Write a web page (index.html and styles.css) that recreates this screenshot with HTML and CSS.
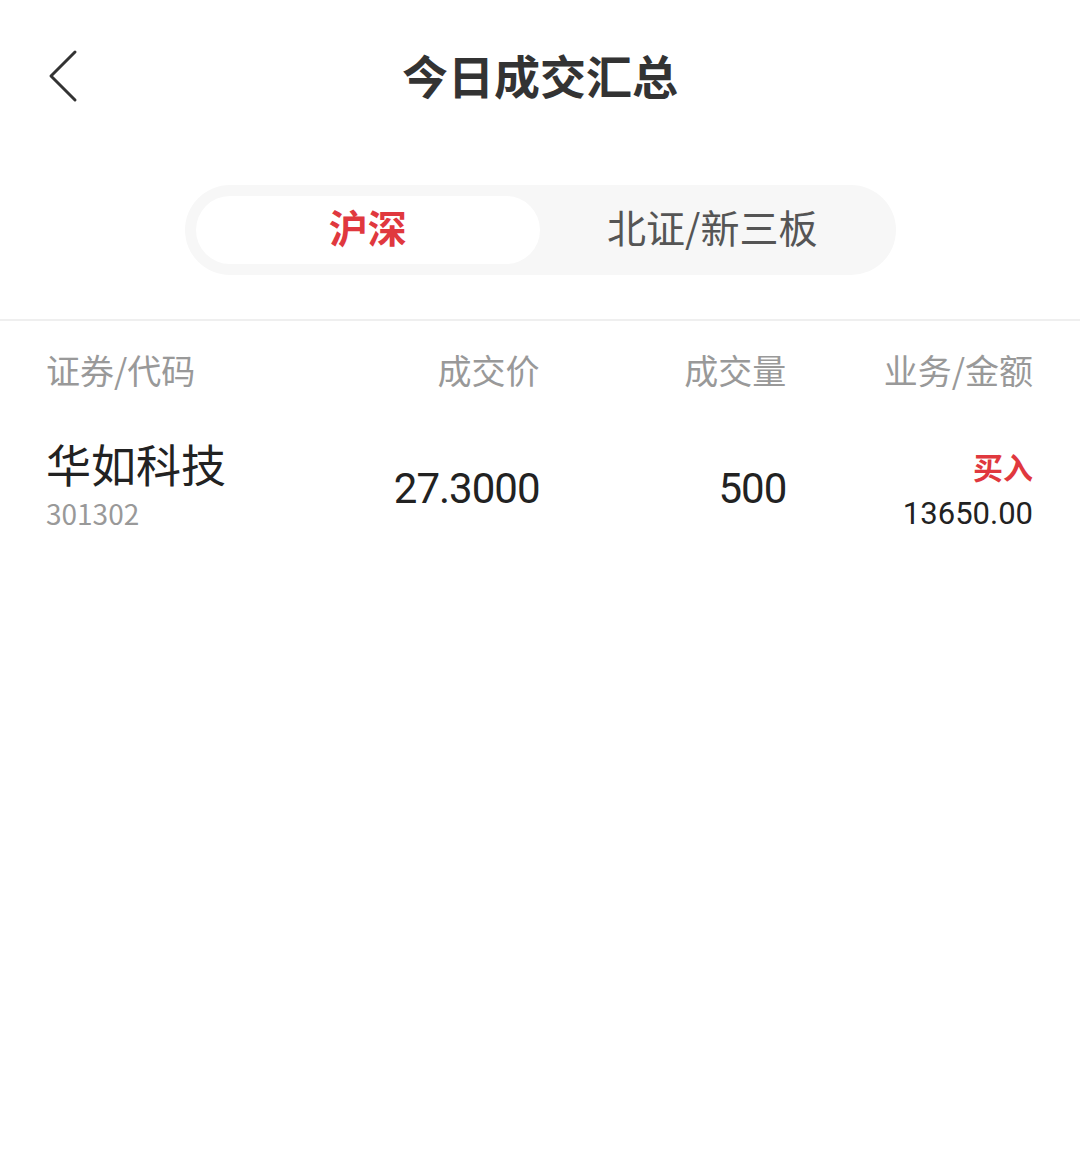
FILE: index.html
```html
<!DOCTYPE html>
<html lang="zh-CN">
<head>
  <meta charset="UTF-8">
  <title>今日成交汇总</title>
  <meta name="viewport" content="width=device-width, initial-scale=1">
  <link rel="stylesheet" href="styles.css">
</head>
<body>

  <!-- Barra superiore -->
  <div class="topbar">
    <span class="back">
      <svg width="34" height="54" viewBox="0 0 34 54">
        <polyline points="29,3 5,27 29,51" fill="none" stroke="#333" stroke-width="3" stroke-linecap="round" stroke-linejoin="round"/>
      </svg>
    </span>
    <h1 class="title">今日成交汇总</h1>
  </div>

  <!-- Selettore mercato -->
  <div class="tabs-wrap">
    <div class="tabs">
      <div class="tab active">沪深</div>
      <div class="tab">北证/新三板</div>
    </div>
  </div>

  <!-- Tabella -->
  <div class="table">
    <div class="row head">
      <div class="col left">证券/代码</div>
      <div class="col">成交价</div>
      <div class="col">成交量</div>
      <div class="col">业务/金额</div>
    </div>
    <div class="row item">
      <div class="col left">
        <div class="name">华如科技</div>
        <div class="code">301302</div>
      </div>
      <div class="col num">27.3000</div>
      <div class="col num">500</div>
      <div class="col">
        <div class="buy">买入</div>
        <div class="amount">13650.00</div>
      </div>
    </div>
  </div>

</body>
</html>
```

FILE: styles.css
```css
body {
  margin: 0;
  background: #fff;
  font-family: "Noto Sans CJK SC", "Noto Sans", sans-serif;
  color: #222;
}

.topbar {
  position: relative;
  height: 148px;
  padding-bottom: 6px;
  display: flex;
  align-items: center;
  justify-content: center;
}

.back {
  position: absolute;
  left: 46px;
  top: 49px;
  width: 34px;
  height: 54px;
}

.title {
  margin: 0;
  font-size: 46px;
  font-weight: bold;
  color: #333;
  line-height: 1;
}

.tabs-wrap {
  padding: 31px 0 44px;
  border-bottom: 2px solid #efefef;
  display: flex;
  justify-content: center;
}

.tabs {
  width: 711px;
  height: 90px;
  box-sizing: border-box;
  padding: 11px;
  background: #f7f7f7;
  border-radius: 45px;
  display: flex;
}

.tab {
  flex: 1;
  display: flex;
  align-items: center;
  justify-content: center;
  padding-bottom: 8px;
  font-size: 39px;
  color: #555;
  border-radius: 34px;
}

.tab.active {
  background: #fff;
  color: #e0383e;
  font-weight: bold;
}

.table {
  padding: 0 47px 0 46px;
}

.row {
  display: grid;
  grid-template-columns: repeat(4, 1fr);
  align-items: center;
}

.col {
  text-align: right;
}

.col.left {
  text-align: left;
}

.head {
  height: 96px;
  font-size: 34px;
  color: #999;
}

.item {
  height: 142px;
}

.name {
  font-size: 45px;
  color: #222;
  line-height: 50px;
}

.code {
  font-size: 28px;
  color: #999;
  line-height: 48px;
}

.num {
  font-size: 42px;
  font-family: Roboto, sans-serif;
  letter-spacing: -1px;
  color: #222;
}

.buy {
  font-size: 30px;
  font-weight: bold;
  color: #e0383e;
  line-height: 52px;
}

.amount {
  font-size: 31px;
  font-family: Roboto, sans-serif;
  color: #222;
  line-height: 44px;
}
```
